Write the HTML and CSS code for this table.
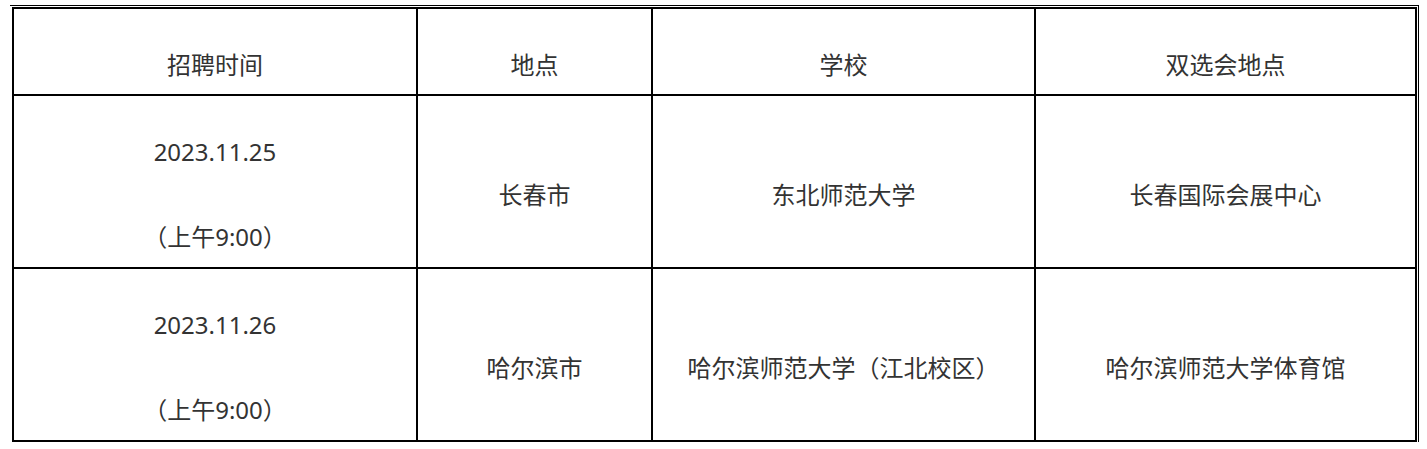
FILE: index.html
```html
<!DOCTYPE html>
<html lang="zh-CN">
<head>
<meta charset="utf-8">
<title>招聘安排</title>
<link rel="stylesheet" href="styles.css">
</head>
<body>
<div class="frame">
<table class="schedule">
  <colgroup>
    <col class="c1"><col class="c2"><col class="c3"><col class="c4">
  </colgroup>
  <tr class="head">
    <td>招聘时间</td>
    <td>地点</td>
    <td>学校</td>
    <td>双选会地点</td>
  </tr>
  <tr class="row">
    <td><div class="when"><span>2023.11.25</span><span>（上午9:00）</span></div></td>
    <td>长春市</td>
    <td>东北师范大学</td>
    <td>长春国际会展中心</td>
  </tr>
  <tr class="row">
    <td><div class="when"><span>2023.11.26</span><span>（上午9:00）</span></div></td>
    <td>哈尔滨市</td>
    <td>哈尔滨师范大学（江北校区）</td>
    <td>哈尔滨师范大学体育馆</td>
  </tr>
</table>
</div>
</body>
</html>
```
FILE: styles.css
```css
html, body {
  margin: 0;
  padding: 0;
  background: #fff;
}
body {
  font-family: "Noto Sans", "Noto Sans CJK SC", sans-serif;
  font-size: 24px;
  color: #333;
}
.frame {
  display: inline-block;
  margin: 5px 0 0 10px;
  padding: 1px 1px 0 2px;
  border-top: 1px solid #000;
  border-right: 1px solid #000;
}
.schedule {
  border-collapse: collapse;
  table-layout: fixed;
  width: 1403px;
}
.c1 { width: 404px; }
.c2 { width: 235px; }
.c3 { width: 383px; }
.c4 { width: 381px; }
.schedule td {
  border: 2px solid #000;
  text-align: center;
  vertical-align: middle;
  padding: 26px 0 0 0;
  line-height: 32px;
}
.head { height: 87px; }
.row { height: 173px; }
.when {
  display: flex;
  flex-direction: column;
  align-items: center;
  gap: 53px;
}
```
